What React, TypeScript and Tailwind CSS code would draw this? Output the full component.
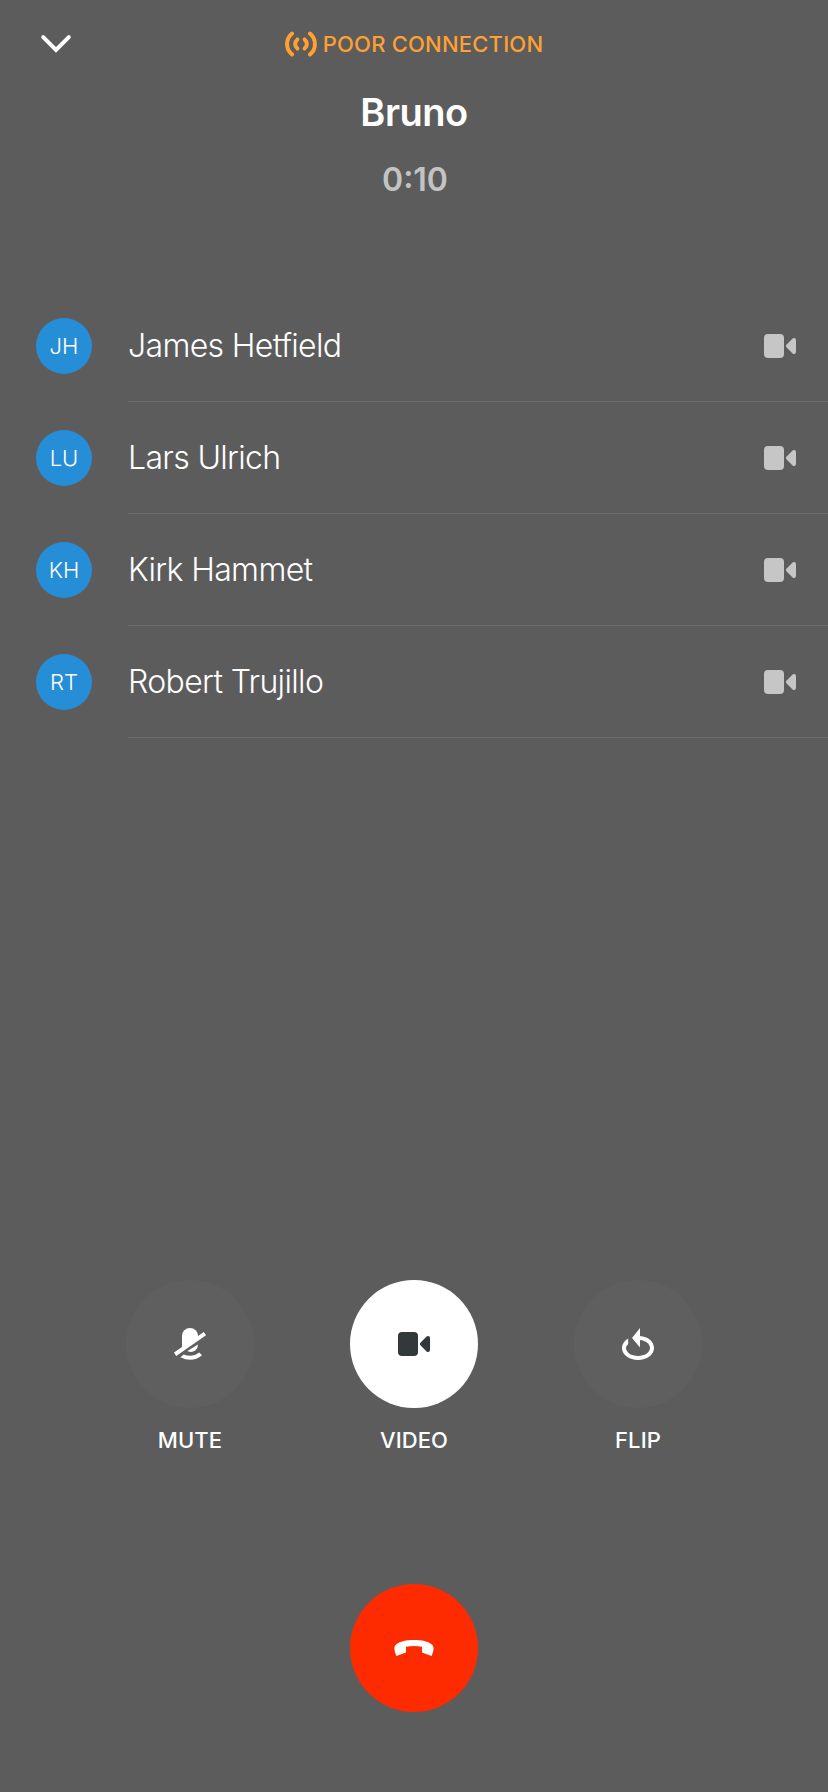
import React from "react";

const participants = [
  { initials: "JH", name: "James Hetfield" },
  { initials: "LU", name: "Lars Ulrich" },
  { initials: "KH", name: "Kirk Hammet" },
  { initials: "RT", name: "Robert Trujillo" },
];

function ChevronDown() {
  return (
    <svg width="32" height="20" viewBox="0 0 32 20" fill="none" stroke="white" strokeWidth="4" strokeLinecap="round">
      <path d="M3.2 3.2 16 16 28.8 3.2" />
    </svg>
  );
}

function SignalIcon() {
  return (
    <svg width="32" height="26" viewBox="0 0 32 26" fill="none" stroke="#FFA033" strokeWidth="4" strokeLinecap="round">
      <path d="M7 2.6C.4 8 .4 18 7 23.4" />
      <path d="M25 2.6C31.6 8 31.6 18 25 23.4" />
      <path d="M12.4 8.4C9.4 11 9.4 15 12.4 17.6" />
      <path d="M19.6 8.4C22.6 11 22.6 15 19.6 17.6" />
    </svg>
  );
}

function CameraIcon({ className }: { className: string }) {
  return (
    <svg width="32" height="24" viewBox="0 0 32 24" fill="currentColor" className={className}>
      <rect width="20" height="24" rx="4" />
      <path d="M22.4 10.8 28.6 4.6Q29.2 4 30 4 32 4 32 6V18Q32 20 30 20 29.2 20 28.6 19.4L22.4 13.2Q21.4 12 22.4 10.8Z" />
    </svg>
  );
}

function MuteIcon() {
  return (
    <svg width="32" height="32" viewBox="0 0 32 32" fill="white">
      <path d="M8 20V8A8 8 0 0 1 24 8V9Z" />
      <path d="M0 24.6 29.8 4 32 7.3 2.2 28Z" />
      <path d="M13.4 23 24 16.6Q24 20.4 21.2 22.6 17.6 25.2 13.4 23Z" />
      <path d="M6.4 29.2 9.8 26.4Q18.4 30 25.2 24.4L28 27.2Q18.4 35.2 6.4 29.2Z" />
    </svg>
  );
}

function FlipIcon() {
  return (
    <svg width="32" height="32" viewBox="0 0 32 32" fill="white">
      <path d="M10 10 18 0V8C26 8.6 32 13.6 32 20 32 26.8 24.8 32 16 32S0 26.8 0 20C0 16 2.4 12.6 6.2 10.4V16.2C4.8 17.2 4 18.6 4 20 4 24.4 9.4 28 16 28S28 24.4 28 20C28 16 23.8 12.6 18 12V19.4Z" />
    </svg>
  );
}

function HangUpIcon() {
  return (
    <svg width="40" height="16" viewBox="0 0 40 16" fill="white">
      <path d="M2.4 16C-.2 9.8-.3 6.2 2.4 4.2 6.2 1.4 12 0 20 0S33.8 1.4 37.6 4.2C40.3 6.2 40.2 9.8 37.6 16L28 12.6V6.8Q20 5 12 6.8V12.6Z" />
    </svg>
  );
}

function ControlButton({ label, circle, children }: { label: string; circle: string; children: React.ReactNode }) {
  return (
    <div className="flex w-32 flex-col items-center">
      <button aria-label={label} className={`flex size-32 items-center justify-center rounded-full ${circle}`}>
        {children}
      </button>
      <span className="mt-4 text-[22px] leading-8 font-medium tracking-[0.1px]">{label}</span>
    </div>
  );
}

export default function App() {
  return (
    <div className="flex h-[1792px] w-[828px] flex-col bg-[#5c5c5c] font-['Inter',sans-serif] text-white">
      <header className="grid h-[88px] grid-cols-[1fr_auto_1fr] items-center px-10">
        <button aria-label="Minimize" className="w-8">
          <ChevronDown />
        </button>
        <div className="flex items-center gap-1.5">
          <SignalIcon />
          <span className="text-[22px] leading-8 font-medium tracking-[0.2px] text-[#FFA033]">POOR CONNECTION</span>
        </div>
      </header>

      <div className="flex h-[202px] flex-col items-center">
        <h1 className="text-[38px] leading-[48px] font-semibold tracking-[-0.5px]">Bruno</h1>
        <p className="mt-6 pl-0.5 text-[32px] leading-10 font-semibold text-[#c3c3c3]">0:10</p>
      </div>

      <ul>
        {participants.map((person) => (
          <li key={person.initials} className="flex h-28 items-center pl-9">
            <span className="flex size-14 items-center justify-center rounded-full bg-[#268ED6] text-[22px] font-light">
              {person.initials}
            </span>
            <div className="ml-9 flex h-full flex-1 items-center justify-between border-b border-[#6d6d6d] pr-8">
              <span className="text-[32px] font-light tracking-[-0.65px]">{person.name}</span>
              <CameraIcon className="text-[#c6c6c6]" />
            </div>
          </li>
        ))}
      </ul>

      <div className="mt-auto flex justify-center gap-24">
        <ControlButton label="MUTE" circle="bg-[#5f5f5f]">
          <MuteIcon />
        </ControlButton>
        <ControlButton label="VIDEO" circle="bg-white">
          <CameraIcon className="text-[#33383B]" />
        </ControlButton>
        <ControlButton label="FLIP" circle="bg-[#5f5f5f]">
          <FlipIcon />
        </ControlButton>
      </div>

      <button
        aria-label="End call"
        className="mt-32 mb-20 flex size-32 items-center justify-center self-center rounded-full bg-[#FF2B00]"
      >
        <HangUpIcon />
      </button>
    </div>
  );
}
